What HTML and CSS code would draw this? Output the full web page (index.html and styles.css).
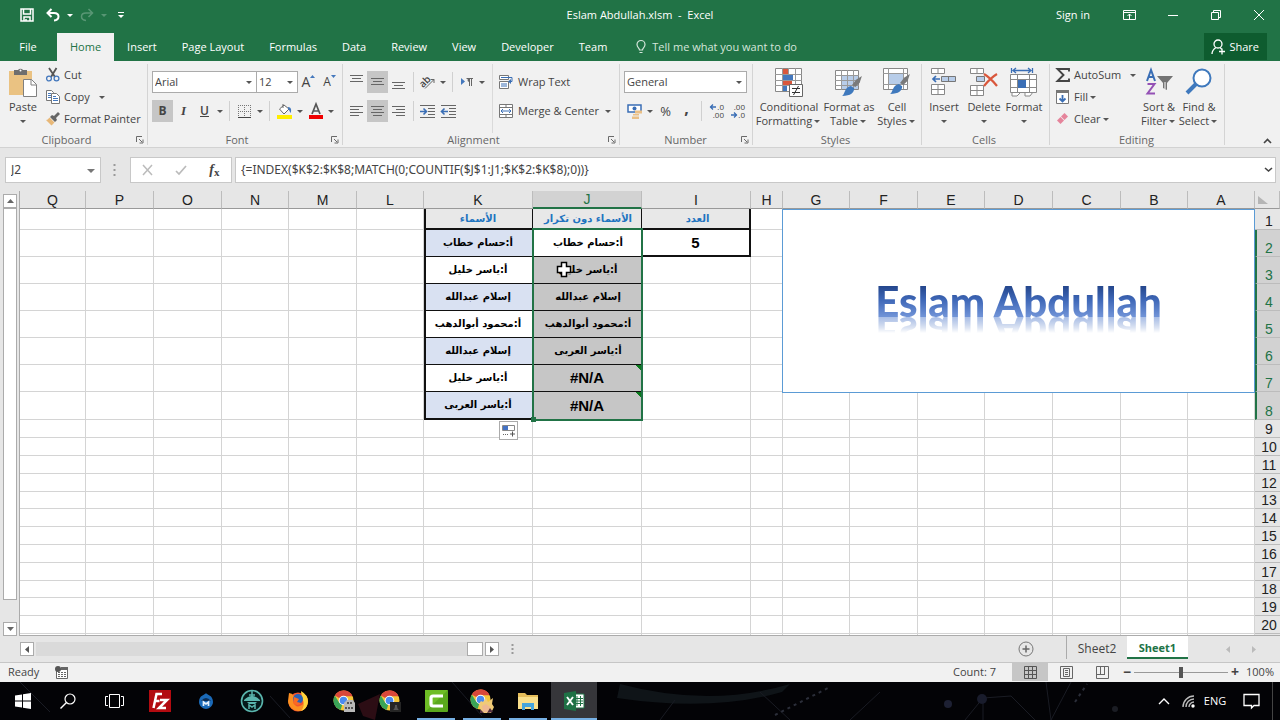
FILE: index.html
```html
<!DOCTYPE html>
<html lang="en">
<head>
<meta charset="utf-8">
<title>Eslam Abdullah.xlsm - Excel</title>
<link rel="stylesheet" href="styles.css">
</head>
<body>
<svg class="defs" aria-hidden="true">
  <symbol id="launch" viewBox="0 0 8 8"><path d="M.5 6V.5H6M3 3l3 3M7 3.500V7H3.500" fill="none" stroke="#6a6a6a"/></symbol>
  <symbol id="brush" viewBox="0 0 20 20"><path d="M19 1l-2 6-4 4-3-2 4-5z" fill="#7a7a7a"/><path d="M9 10l3 2c0 4-3 7-11 7 3-2 2-8 8-9z" fill="#3f79bd"/></symbol>
  <symbol id="chrome" viewBox="0 0 22 22"><circle cx="11" cy="11" r="10.500" fill="#f4c63a"/><path d="M11 11L1.900 5.750A10.500 10.500 0 0 1 20.100 5.750L11 6z" fill="#d9483b"/><path d="M11 11L8 21A10.500 10.500 0 0 1 1.900 5.750L6.700 13.500z" fill="#3aa457"/><path d="M11 .5A10.500 10.500 0 0 1 20.500 6.500H11z" fill="#d9483b"/><circle cx="11" cy="11" r="5" fill="#fff"/><circle cx="11" cy="11" r="4" fill="#4a8af0"/></symbol>
</svg>

<header class="titlebar">
  <div class="quick">
    <button aria-label="Save"><svg width="14" height="14" viewBox="0 0 14 14"><path d="M1 1h12v12H1zM3.500 1v5h7V1M4 13V9h6v4M6 13v-2" fill="none" stroke="#fff" stroke-width="1.500"/></svg></button>
    <button aria-label="Undo"><svg width="14" height="14" viewBox="0 0 14 14"><path d="M5.500 1L1.500 5l4 4M2 5h6c6 0 6 7 0 7.500" fill="none" stroke="#fff" stroke-width="2"/></svg></button>
    <i class="caret light"></i>
    <button aria-label="Redo" class="faded"><svg width="14" height="14" viewBox="0 0 14 14"><path d="M8.500 1l4 4-4 4M12 5H6c-6 0-6 7 0 7.500" fill="none" stroke="#fff" stroke-width="1.500"/></svg></button>
    <i class="caret light faded"></i>
    <button aria-label="Customize Quick Access Toolbar"><svg width="8" height="8" viewBox="0 0 8 8"><path d="M1 1.500h6" stroke="#fff"/><path d="M1 4h6L4 7z" fill="#fff"/></svg></button>
  </div>
  <h1>Eslam Abdullah.xlsm&nbsp; -&nbsp; Excel</h1>
  <div class="window">
    <button class="signin">Sign in</button>
    <button aria-label="Ribbon Display Options"><svg width="14" height="12" viewBox="0 0 14 12"><path d="M.5 1.500h12v9H.5zM.5 3.500h12M6.500 10V5M4.500 7l2-2 2 2" fill="none" stroke="#fff"/></svg></button>
    <button aria-label="Minimize"><svg width="10" height="10" viewBox="0 0 10 10"><path d="M0 5.500h10" stroke="#fff"/></svg></button>
    <button aria-label="Restore"><svg width="10" height="10" viewBox="0 0 10 10"><path d="M.5 2.500h7v7h-7zM2.500 2.500v-2h7v7h-2" fill="none" stroke="#fff"/></svg></button>
    <button aria-label="Close"><svg width="10" height="10" viewBox="0 0 10 10"><path d="M0 0l10 10M10 0L0 10" stroke="#fff"/></svg></button>
  </div>
</header>

<nav class="tabs">
  <button class="file">File</button><button class="on">Home</button><button>Insert</button><button>Page Layout</button><button>Formulas</button><button>Data</button><button>Review</button><button>View</button><button>Developer</button><button>Team</button>
  <button class="tell"><svg width="10" height="14" viewBox="0 0 10 14"><path d="M3.500 10C3.500 8 1 7.500 1 4.500a4 4 0 0 1 8 0C9 7.500 6.500 8 6.500 10zM3.500 12.500h3" fill="none" stroke="#d5e6db" stroke-width="1.200"/></svg>Tell me what you want to do</button>
  <button class="share"><svg width="15" height="16" viewBox="0 0 15 16"><circle cx="7" cy="5" r="4" fill="none" stroke="#fff" stroke-width="1.300"/><path d="M1 15c0-3 1-4.500 4-6.500M9 8.500l2 2M11 9.500v6M8 12.500h6" fill="none" stroke="#fff" stroke-width="1.300"/></svg>Share</button>
</nav>

<section class="ribbon">
  <div class="group g-clip">
    <div class="body">
      <button class="big paste"><svg width="28" height="30" viewBox="0 0 28 30"><path d="M0 3h23v24H0z" fill="#eac282"/><path d="M5 2h4a3 3 0 0 1 5 0h4v5H5z" fill="#6e6e6e"/><circle cx="11.500" cy="2.500" r="1" fill="#fff"/><path d="M14.500 11.500h8l5 5v12h-13z" fill="#fff" stroke="#808080"/><path d="M22 11.500v5.500h5.500" fill="none" stroke="#808080"/></svg><span>Paste</span><i class="caret"></i></button>
      <div class="stack">
        <button><svg width="14" height="14" viewBox="0 0 14 14"><path d="M3 0l6 9M10.500 0L5 9" stroke="#555" stroke-width="1.800"/><circle cx="3" cy="10.500" r="2.400" fill="none" stroke="#4478bd" stroke-width="1.300"/><circle cx="10.500" cy="10.500" r="2.400" fill="none" stroke="#4478bd" stroke-width="1.300"/></svg>Cut</button>
        <button><svg width="14" height="14" viewBox="0 0 14 14"><path d="M.5.5h5l2 2v8h-7z" fill="#fff" stroke="#777"/><path d="M2 3.500h3M2 5.500h4M2 7.500h4" stroke="#4478bd"/><path d="M5.500 3.500h5l3 3v7h-8z" fill="#fff" stroke="#777"/><path d="M7 6.500h3M7 8.500h5M7 10.500h5" stroke="#4478bd"/></svg>Copy<i class="caret far"></i></button>
        <button><svg width="14" height="14" viewBox="0 0 14 14"><path d="M12 0l2 2-4 4 1 2-2 2-5-5 2-2 2 1z" fill="#666"/><path d="M3.500 5.500l5 5-3 3L0 8c2 0 2-1 3.500-2.500z" fill="#e8b878"/></svg>Format Painter</button>
      </div>
    </div>
    <footer>Clipboard<button aria-label="Clipboard settings"><svg width="8" height="8"><use href="#launch"/></svg></button></footer>
  </div>

  <div class="group g-font">
    <div class="body rows">
      <div class="row">
        <span class="combo face"><select aria-label="Font"><option>Arial</option></select></span><span class="combo size"><select aria-label="Font size"><option>12</option></select></span>
        <button class="ib grow" aria-label="Increase font size"><b class="glyph">A</b><svg width="5" height="3"><path d="M0 3h5L2.500 0z" fill="#4478bd"/></svg></button>
        <button class="ib grow" aria-label="Decrease font size"><b class="glyph small">A</b><svg width="5" height="3"><path d="M0 0h5L2.500 3z" fill="#4478bd"/></svg></button>
      </div>
      <div class="row">
        <button class="ib on"><b>B</b></button><button class="ib serif"><em>I</em></button><button class="ib"><u>U</u></button><i class="caret"></i><i class="sep"></i>
        <button class="ib" aria-label="Borders"><svg width="13" height="13" viewBox="0 0 13 13"><path d="M.5 0v12M6.500 0v12M12.500 0v12M0 .5h13M0 6.500h13" stroke="#777" stroke-dasharray="1 1"/><path d="M0 12.500h13" stroke="#444"/></svg></button><i class="caret"></i><i class="sep"></i>
        <button class="ib" aria-label="Fill color"><svg width="16" height="16" viewBox="0 0 16 16"><path d="M6 1v4M2.500 6L7 2l5 4-5 5z" fill="#fff" stroke="#666"/><path d="M11 4c3 0 4 3 2.500 6-1-2-1-3-2.500-4z" fill="#4478bd"/><path d="M0 12h15v4H0z" fill="#ffee00"/></svg></button><i class="caret"></i>
        <button class="ib" aria-label="Font color"><svg width="16" height="16" viewBox="0 0 16 16"><path d="M4 11L8 1l4 10M5.500 8h5" fill="none" stroke="#555" stroke-width="1.700"/><path d="M1 12h14v4H1z" fill="#f00000"/></svg></button><i class="caret"></i>
      </div>
    </div>
    <footer>Font<button aria-label="Font settings"><svg width="8" height="8"><use href="#launch"/></svg></button></footer>
  </div>

  <div class="group g-align">
    <div class="body">
      <div class="rows">
        <div class="row">
          <button class="ib" aria-label="Top align"><svg width="13" height="14"><path d="M0 .5h13M2 3.500h9M0 6.500h13" stroke="#666"/></svg></button><button class="ib on" aria-label="Middle align"><svg width="13" height="14"><path d="M0 3.500h13M2 6.500h9M0 9.500h13" stroke="#666"/></svg></button><button class="ib" aria-label="Bottom align"><svg width="13" height="14"><path d="M0 7.500h13M2 10.500h9M0 13.500h13" stroke="#666"/></svg></button><i class="sep"></i>
          <button class="ib" aria-label="Orientation"><svg width="15" height="14" viewBox="0 0 15 14"><text x="-1" y="10" transform="rotate(-45 5 7)" font-family="Open Sans, sans-serif" font-size="10" font-weight="600" fill="#444">ab</text><path d="M5 13.500l9-9M14 8V4.500h-3.500" fill="none" stroke="#666"/></svg></button><i class="caret"></i><i class="sep"></i>
          <button class="ib" aria-label="Text direction"><svg width="12" height="10" viewBox="0 0 12 10"><path d="M0 1l4 3.500L0 8z" fill="#4478bd"/><path d="M8.500 1v8M10.500 1v8M5.500 1.500H12" stroke="#666"/><path d="M8.500 1a2 2 0 0 0 0 4z" fill="#666"/></svg></button><i class="caret"></i>
        </div>
        <div class="row">
          <button class="ib" aria-label="Align left"><svg width="13" height="12"><path d="M0 1.500h13M0 4.500h9M0 7.500h13M0 10.500h9" stroke="#666"/></svg></button><button class="ib on" aria-label="Center"><svg width="13" height="12"><path d="M0 1.500h13M2 4.500h9M0 7.500h13M2 10.500h9" stroke="#666"/></svg></button><button class="ib" aria-label="Align right"><svg width="13" height="12"><path d="M0 1.500h13M4 4.500h9M0 7.500h13M4 10.500h9" stroke="#666"/></svg></button><i class="sep"></i>
          <button class="ib" aria-label="Decrease indent"><svg width="15" height="13" viewBox="0 0 15 13"><path d="M0 .5h15M8 3.500h7M8 6.500h7M8 9.500h7M0 12.500h15" stroke="#666"/><path d="M0 6.500h6M3.500 3.500l3 3-3 3" fill="none" stroke="#3a6eb5" stroke-width="1.600"/></svg></button><button class="ib" aria-label="Increase indent"><svg width="15" height="13" viewBox="0 0 15 13"><path d="M0 .5h15M8 3.500h7M8 6.500h7M8 9.500h7M0 12.500h15" stroke="#666"/><path d="M1 6.500h6M3.500 3.500l-3 3 3 3" fill="none" stroke="#3a6eb5" stroke-width="1.600"/></svg></button>
        </div>
      </div>
      <div class="rows wide">
        <button class="row"><svg width="15" height="14" viewBox="0 0 15 14"><path d="M.5.500h9v4h-9zM.5 6.500h9v7h-9z" fill="#fff" stroke="#777"/><path d="M2 2.500h11v4h-2M2 9h6M2 11h6" fill="none" stroke="#3a6eb5"/><path d="M12 4v5L9 6.500z" fill="#3a6eb5"/></svg>Wrap Text</button>
        <button class="row"><svg width="15" height="14" viewBox="0 0 15 14"><path d="M.5.500h13v13H.5zM.5 3.500h13M.5 10.500h13M7 .5v3M7 10.500v3" fill="#fff" stroke="#777"/><path d="M2 7h10M4 5L2 7l2 2M10 5l2 2-2 2" fill="none" stroke="#3a6eb5"/></svg>Merge &amp; Center<i class="caret near"></i></button>
      </div>
    </div>
    <footer>Alignment<button aria-label="Alignment settings"><svg width="8" height="8"><use href="#launch"/></svg></button></footer>
  </div>

  <div class="group g-num">
    <div class="body rows">
      <div class="row"><span class="combo format"><select aria-label="Number format"><option>General</option></select></span></div>
      <div class="row">
        <button class="ib" aria-label="Accounting format"><svg width="16" height="15" viewBox="0 0 16 15"><path d="M1 1h13v7H1z" fill="#fff" stroke="#3a6eb5" stroke-width="1.500"/><circle cx="7.500" cy="4.500" r="2" fill="#3a6eb5"/><path d="M8 6.500h7v3H8zM6 10h6v1.500H6zM5 12.500h7V15H5z" fill="#eabf86"/></svg></button><i class="caret"></i><button class="ib pct">%</button><button class="ib comma">,</button><i class="sep"></i>
        <button class="ib dec" aria-label="Increase decimal"><span><svg width="6" height="6"><path d="M0 3h6M3 .5L.5 3 3 5.500" fill="none" stroke="#3a6eb5" stroke-width="1.300"/></svg>.0</span><span>.00</span></button><button class="ib dec" aria-label="Decrease decimal"><span>.00</span><span><svg width="6" height="6"><path d="M0 3h6M3 .5L5.500 3 3 5.500" fill="none" stroke="#3a6eb5" stroke-width="1.300"/></svg>.0</span></button>
      </div>
    </div>
    <footer>Number<button aria-label="Number settings"><svg width="8" height="8"><use href="#launch"/></svg></button></footer>
  </div>

  <div class="group g-styles">
    <div class="body">
      <button class="big w68"><svg width="28" height="30" viewBox="0 0 28 30"><path d="M.5.500h26v23H.5z" fill="#fff" stroke="#888"/><path d="M8 1h5v5H8zM8 12h9v5H8z" fill="#d9573c"/><path d="M8 6h10v6H8zM8 17h4v6H8z" fill="#4478bd"/><path d="M7.500 0v23M13.500 0v6M20.500 0v23M0 6.500h27M0 12.500h27M0 17.500h27" stroke="#999" fill="none"/><path d="M14.500 16.500h13v12h-13z" fill="#fff" stroke="#666"/><path d="M17 20.500h8M17 24.500h8M23.500 18l-5 9" stroke="#333"/></svg><span>Conditional</span><span>Formatting<i class="caret"></i></span></button>
      <button class="big w52"><svg width="28" height="30" viewBox="0 0 28 30"><path d="M.5 2.500h23v19H.5z" fill="#fff" stroke="#888"/><path d="M6 7h17v14H6z" fill="#b8cde9"/><path d="M6.500 2v20M12.500 2v20M18.500 2v20M0 7.500h24M0 12.500h24M0 17.500h24" stroke="#999"/><use href="#brush" x="6" y="7" width="22" height="22"/></svg><span>Format as</span><span>Table<i class="caret"></i></span></button>
      <button class="big w44"><svg width="28" height="30" viewBox="0 0 28 30"><path d="M.5.500h24v21H.5z" fill="#fff" stroke="#888"/><path d="M6 6h14v10H6z" fill="#b8cde9"/><path d="M5.500 0v21M20.500 0v21M0 5.500h25M0 16.500h25" stroke="#999"/><use href="#brush" x="6" y="5" width="22" height="22"/></svg><span>Cell</span><span>Styles<i class="caret"></i></span></button>
    </div>
    <footer>Styles</footer>
  </div>

  <div class="group g-cells">
    <div class="body">
      <button class="big w40"><svg width="26" height="30" viewBox="0 0 26 30"><path d="M.5.500h13v5H.5zM7 .5v5M.5 16.500h13v10H.5zM7 16.500v10M.5 21.500h13" fill="#fff" stroke="#888"/><path d="M10.500 8.500h14v5h-14zM17.500 8.500v5" fill="#b8cde9" stroke="#777"/><path d="M2 11h7M5 8l-3 3 3 3" fill="none" stroke="#3a6eb5" stroke-width="1.700"/></svg><span>Insert</span><i class="caret"></i></button>
      <button class="big w40"><svg width="28" height="30" viewBox="0 0 28 30"><path d="M.5.500h13v5H.5zM7 .5v5M.5 17.500h13v10H.5zM7 17.500v10M.5 22.500h13" fill="#fff" stroke="#888"/><path d="M6.500 8.500h8v5h-8z" fill="#b8cde9" stroke="#777"/><path d="M14 6c5 3 9 7 13 12M27 6c-5 3-9 7-13 12" fill="none" stroke="#d9573c" stroke-width="2.200"/></svg><span>Delete</span><i class="caret"></i></button>
      <button class="big w40"><svg width="28" height="30" viewBox="0 0 28 30"><path d="M1.500 0v5M22.500 0v5M3 2.500h18M6 0L3 2.500 6 5M18 0l3 2.500L18 5" fill="none" stroke="#3a6eb5" stroke-width="1.300"/><path d="M.5 6.500h26v18H.5zM7.500 6v18M19.500 6v18M.5 11.500h26M.5 19.500h26M2 24v4h5l4-4M15 24v4h5l3-4" fill="#fff" stroke="#888"/><path d="M8 12h8v8H8z" fill="#3a6eb5"/></svg><span>Format</span><i class="caret"></i></button>
    </div>
    <footer>Cells</footer>
  </div>

  <div class="group g-edit">
    <div class="body">
      <div class="stack">
        <button><svg width="14" height="14" viewBox="0 0 14 14"><path d="M13 3.500V1H1.500l6 6-6 6H13v-2.500" fill="none" stroke="#444" stroke-width="1.900"/></svg>AutoSum<i class="caret far"></i></button>
        <button><svg width="14" height="14" viewBox="0 0 14 14"><path d="M.5.500h12v13H.5z" fill="#fff" stroke="#777"/><path d="M0 0h13v3H0z" fill="#777"/><path d="M6.500 5v7M3.500 8.500l3 3 3-3" fill="none" stroke="#3a6eb5" stroke-width="1.800"/></svg>Fill<i class="caret"></i></button>
        <button><svg width="14" height="14" viewBox="0 0 14 14"><path d="M8.500 1L12 4.500 8.500 8 5 4.500z" fill="#e5849b"/><path d="M4.500 5L8 8.500 4.500 12 1 8.500z" fill="#e5849b"/></svg>Clear<i class="caret"></i></button>
      </div>
      <button class="big w40"><svg width="28" height="30" viewBox="0 0 28 30"><path d="M2 13L6 2l4 11M3 9h6" fill="none" stroke="#3a6eb5" stroke-width="2"/><path d="M2.500 16h7L2.500 25.500h7.500" fill="none" stroke="#9451b5" stroke-width="2"/><path d="M12 8h16l-6 7v7l-4-2v-5z" fill="#737373"/><path d="M20 14v7" stroke="#fff"/></svg><span>Sort &amp;</span><span>Filter<i class="caret"></i></span></button>
      <button class="big w40"><svg width="28" height="30" viewBox="0 0 28 30"><circle cx="17" cy="10" r="8.500" fill="#fff" stroke="#3f79bd" stroke-width="2"/><path d="M11 16L2 25" stroke="#3f79bd" stroke-width="4"/></svg><span>Find &amp;</span><span>Select<i class="caret"></i></span></button>
    </div>
    <footer>Editing</footer>
  </div>
  <button class="collapse" aria-label="Collapse the ribbon"><svg width="9" height="6"><path d="M1 5l3.500-3.500L8 5" fill="none" stroke="#444" stroke-width="1.600"/></svg></button>
</section>

<section class="formula">
  <span class="combo name"><input aria-label="Name box" value="J2"></span>
  <svg class="grip" width="3" height="12"><path d="M1.500 0v12" stroke="#999" stroke-width="2" stroke-dasharray="2 3"/></svg>
  <div class="fx">
    <button aria-label="Cancel"><svg width="11" height="10"><path d="M1 0l9 10M10 0L1 10" stroke="#bbb" stroke-width="1.500"/></svg></button>
    <button aria-label="Enter"><svg width="12" height="10"><path d="M1 6l3 3 7-8" fill="none" stroke="#bbb" stroke-width="1.700"/></svg></button>
    <button class="fn" aria-label="Insert function"><em>f</em><small>x</small></button>
  </div>
  <div class="entry"><input aria-label="Formula" value="{=INDEX($K$2:$K$8;MATCH(0;COUNTIF($J$1:J1;$K$2:$K$8);0))}"><svg width="9" height="6"><path d="M1 1l3.500 3L8 1" fill="none" stroke="#444" stroke-width="1.600"/></svg></div>
</section>

<main class="work">
  <div class="vscroll"><button aria-label="Scroll up"><svg width="7" height="4"><path d="M0 4h7L3.500 0z" fill="#666"/></svg></button><div class="thumb"></div><button aria-label="Scroll down"><svg width="7" height="4"><path d="M0 0h7L3.500 4z" fill="#666"/></svg></button></div>
  <div class="sheet">
    <table>
      <colgroup><col class="c66"><col class="c68"><col class="c68"><col class="c67"><col class="c68"><col class="c67"><col class="c109"><col class="c109"><col class="c109"><col class="c32"><col class="c67"><col class="c68"><col class="c67"><col class="c68"><col class="c68"><col class="c67"><col class="c67"><col class="c25"></colgroup>
      <thead><tr><th>Q</th><th>P</th><th>O</th><th>N</th><th>M</th><th>L</th><th>K</th><th class="sel">J</th><th>I</th><th>H</th><th>G</th><th>F</th><th>E</th><th>D</th><th>C</th><th>B</th><th>A</th><th class="corner"><svg width="10" height="8"><path d="M0 0l10 8H0z" fill="#b5b5b5"/></svg></th></tr></thead>
      <tbody>
      <tr class="first"><td><td><td><td><td><td><td class="hd k" dir="rtl">الأسماء</td><td class="hd j" dir="rtl">الأسماء دون تكرار</td><td class="hd i" dir="rtl">العدد</td><td><td><td><td><td><td><td><td><th>1</th></tr>
      <tr class="tall"><td><td><td><td><td><td><td class="k tint" dir="rtl">أ:حسام خطاب</td><td class="j active" dir="rtl">أ:حسام خطاب<div class="selection"></div></td><td class="i total">5</td><td><td><td><td><td><td><td><td><th class="sel">2</th></tr>
      <tr class="tall"><td><td><td><td><td><td><td class="k" dir="rtl">أ:ياسر خليل</td><td class="j" dir="rtl">أ:ياسر خليل<svg class="pointer" width="14" height="17" viewBox="0 0 14 17"><path d="M4.500 1.500h5v4h4v6h-4v4h-5v-4h-4v-6h4z" fill="#fff" stroke="#000" stroke-width="1.500"/></svg></td><td><td><td><td><td><td><td><td><td><th class="sel">3</th></tr>
      <tr class="tall"><td><td><td><td><td><td><td class="k tint" dir="rtl">إسلام عبدالله</td><td class="j" dir="rtl">إسلام عبدالله</td><td><td><td><td><td><td><td><td><td><th class="sel">4</th></tr>
      <tr class="tall"><td><td><td><td><td><td><td class="k" dir="rtl">أ:محمود أبوالدهب</td><td class="j" dir="rtl">أ:محمود أبوالدهب</td><td><td><td><td><td><td><td><td><td><th class="sel">5</th></tr>
      <tr class="tall"><td><td><td><td><td><td><td class="k tint" dir="rtl">إسلام عبدالله</td><td class="j" dir="rtl">أ:ياسر العربى</td><td><td><td><td><td><td><td><td><td><th class="sel">6</th></tr>
      <tr class="tall"><td><td><td><td><td><td><td class="k" dir="rtl">أ:ياسر خليل</td><td class="j err">#N/A</td><td><td><td><td><td><td><td><td><td><th class="sel">7</th></tr>
      <tr class="tall last"><td><td><td><td><td><td><td class="k tint" dir="rtl">أ:ياسر العربى<button class="autofill" aria-label="Auto fill options"><svg width="13" height="13" viewBox="0 0 13 13"><path d="M.5 1.500h12v5H.5z" fill="#fff" stroke="#888"/><path d="M1 2h5v4H1z" fill="#4472c4"/><path d="M1 10.500h6" stroke="#666" stroke-dasharray="1 1"/><path d="M8 10h5M10.500 7.500v5" stroke="#555"/></svg></button></td><td class="j err">#N/A</td><td><td><td><td><td><td><td><td><td><th class="sel">8</th></tr>
      <tr><td><td><td><td><td><td><td><td><td><td><td><td><td><td><td><td><td><th>9</th></tr>
      <tr><td><td><td><td><td><td><td><td><td><td><td><td><td><td><td><td><td><th>10</th></tr>
      <tr><td><td><td><td><td><td><td><td><td><td><td><td><td><td><td><td><td><th>11</th></tr>
      <tr><td><td><td><td><td><td><td><td><td><td><td><td><td><td><td><td><td><th>12</th></tr>
      <tr class="tight"><td><td><td><td><td><td><td><td><td><td><td><td><td><td><td><td><td><th>13</th></tr>
      <tr><td><td><td><td><td><td><td><td><td><td><td><td><td><td><td><td><td><th>14</th></tr>
      <tr><td><td><td><td><td><td><td><td><td><td><td><td><td><td><td><td><td><th>15</th></tr>
      <tr><td><td><td><td><td><td><td><td><td><td><td><td><td><td><td><td><td><th>16</th></tr>
      <tr><td><td><td><td><td><td><td><td><td><td><td><td><td><td><td><td><td><th>17</th></tr>
      <tr class="tight"><td><td><td><td><td><td><td><td><td><td><td><td><td><td><td><td><td><th>18</th></tr>
      <tr><td><td><td><td><td><td><td><td><td><td><td><td><td><td><td><td><td><th>19</th></tr>
      <tr><td><td><td><td><td><td><td><td><td><td><td><td><td><td><td><td><td><th>20</th></tr>
      <tr><td><td><td><td><td><td><td><td><td><td><td><td><td><td><td><td><td><th></th></tr>
      </tbody>
    </table>
    <div class="banner"><span>Eslam Abdullah</span></div>
  </div>
</main>

<div class="sheetbar">
  <div class="hscroll"><button aria-label="Scroll left"><svg width="4" height="7"><path d="M4 0v7L0 3.500z" fill="#555"/></svg></button><div class="track"><div class="thumb"></div></div><button aria-label="Scroll right"><svg width="4" height="7"><path d="M0 0v7l4-3.500z" fill="#555"/></svg></button></div>
  <svg class="dots" width="3" height="10"><path d="M1.500 0v10" stroke="#999" stroke-width="2" stroke-dasharray="2 2"/></svg>
  <button class="add" aria-label="New sheet"><svg width="16" height="16"><circle cx="8" cy="8" r="7" fill="none" stroke="#777"/><path d="M8 4.500v7M4.500 8h7" stroke="#666" stroke-width="1.500"/></svg></button>
  <button class="tab">Sheet2</button><button class="tab on">Sheet1</button>
  <div class="pager"><button aria-label="Previous sheet"><svg width="4" height="7"><path d="M4 0v7L0 3.500z" fill="#bbb"/></svg></button><button aria-label="Next sheet"><svg width="4" height="7"><path d="M0 0v7l4-3.500z" fill="#bbb"/></svg></button></div>
</div>

<div class="status">
  <span>Ready</span>
  <button class="macro" aria-label="Record macro"><svg width="13" height="13" viewBox="0 0 13 13"><path d="M1.500 3.500h11v9h-11z" fill="#fff" stroke="#666"/><path d="M6 1h7v3H6z" fill="#666"/><circle cx="3" cy="3" r="3" fill="#555"/><path d="M3 6.500h9M3 8.500h9M3 10.500h9" stroke="#666" stroke-dasharray="2 1"/></svg></button>
  <span class="count">Count: 7</span>
  <button class="view on" aria-label="Normal"><svg width="13" height="13"><path d="M.5.500h12v12H.5zM4.500 0v13M8.500 0v13M0 4.500h13M0 8.500h13" fill="none" stroke="#555"/></svg></button>
  <button class="view" aria-label="Page layout"><svg width="13" height="13"><path d="M.5.500h12v12H.5zM3.500 2.500h6v8h-6zM5 4.500h3M5 6.500h3M5 8.500h3" fill="none" stroke="#666"/></svg></button>
  <button class="view" aria-label="Page break preview"><svg width="13" height="13"><path d="M.5.500h12v12H.5zM4.500 0v8M8.500 0v8M0 8.500h9" fill="none" stroke="#666"/></svg></button>
  <button class="zoom" aria-label="Zoom out">−</button><input type="range" aria-label="Zoom" min="0" max="200" value="100"><button class="zoom" aria-label="Zoom in">+</button>
  <span class="percent">100%</span>
</div>

<footer class="taskbar">
  <svg class="wall" viewBox="0 0 1280 38" preserveAspectRatio="none" aria-hidden="true"><path d="M620 2q90 24 170 0l-8 8q-70 20-165 6z" fill="#0f1418"/><path d="M358 22l22-10-5 26-12-4z" fill="#2c0d14"/><path d="M452 0l30 34M760 10l30 28M660 38l15-20M880 10l-30 28M965 38l18-22 28-2 24 24M983 16V38M1046 0l5 38 20-38M20 0l30 30M270 14l20 22" fill="none" stroke="#1a1c24"/><path d="M775 33l55-28M1075 20l12-18" stroke="#2b2e39" stroke-width="2" stroke-dasharray="3 4"/><circle cx="948" cy="22" r="4" fill="#1d2033"/><circle cx="982" cy="17" r="5" fill="#191c2c"/><circle cx="1115" cy="27" r="3" fill="#1b1d24"/></svg>
  <button class="start" aria-label="Start"><svg width="16" height="16"><path d="M0 2.500L7 1.500v6H0zM8 1.300L16 0v7.500H8zM0 8.500h7v6l-7-1zM8 8.500h8V16l-8-1.200z" fill="#fff"/></svg></button>
  <button aria-label="Search"><svg width="16" height="16"><circle cx="10" cy="6" r="5" fill="none" stroke="#fff" stroke-width="1.200"/><path d="M6.500 9.500L.5 15.500" stroke="#fff" stroke-width="1.400"/></svg></button>
  <button aria-label="Task view"><svg width="19" height="14"><path d="M4.500.5h10v13h-10zM3 2.500H.5v9H3M16 2.500h2.500v9H16" fill="none" stroke="#fff"/></svg></button>
  <button aria-label="FileZilla"><svg width="22" height="22"><path d="M0 0h22v22H0z" fill="#b30b10"/><path d="M13 4H7.500L4.500 18M5.500 11h5M11 10h7l-8 8h7" fill="none" stroke="#fff" stroke-width="2.500"/></svg></button>
  <button aria-label="Blue drop"><svg width="16" height="18"><path d="M8 1c1 2 7 2 7 9 0 4-4 7-7 7s-7-3-7-7c0-7 6-7 7-9z" fill="#1b6ab8"/><path d="M3 9q5-6 10 0z" fill="#0c2d55"/><path d="M5.500 14v-4l2.500 2 2.500-2v4" fill="none" stroke="#e4effa" stroke-width="1.700"/></svg></button>
  <button aria-label="Teal app"><svg width="24" height="24"><circle cx="12" cy="12" r="10.500" fill="#06191a" stroke="#5ab5ad" stroke-width="1.600"/><path d="M4 11q8-8 16 0v1H4zM7 13h10l-2 2H9z" fill="#5ab5ad"/><path d="M12 1v7M9 6h6M9 20v-4l3 2 3-2v4" fill="none" stroke="#5ab5ad" stroke-width="1.500"/></svg></button>
  <button aria-label="Firefox"><svg width="22" height="22"><circle cx="11" cy="12" r="9.500" fill="#f2542d"/><path d="M2 3q3 0 5 3l-1 6q3 7 9 3 4-3 1-8l-2-5q7 3 7 9c0 6-4 10-9 10S1 17 1 11z" fill="#fc8f20"/><path d="M14 1q7 4 7 11-1 7-7 9 5-6 1-13z" fill="#ffd43c"/><circle cx="11" cy="9" r="5" fill="#2862b8"/><path d="M7 7l5 2-2 3 4 1q-3 4-8 0z" fill="#f96a24"/></svg></button>
  <button aria-label="Chrome profile 1"><svg width="22" height="22"><use href="#chrome" width="21" height="21"/><path d="M11 13l3-3h6l2 3v9H11z" fill="#b9b9b9"/><path d="M12 18h9M14 13h5" stroke="#555" stroke-width="2" stroke-dasharray="2 1"/></svg></button>
  <button aria-label="Chrome profile 2"><svg width="22" height="22"><use href="#chrome" width="21" height="21"/><path d="M11 12h11v10H11z" fill="#252525"/><path d="M14 20q2-1 2-5h2q0 4 2 5z" fill="#555"/></svg></button>
  <button class="run" aria-label="Camtasia"><svg width="23" height="22"><rect width="23" height="22" rx="1" fill="#5aa81c"/><path d="M0 0h23L0 22z" fill="#6ebd25"/><path d="M18 6H8Q6 6 6 8v6q0 2 2 2h10" fill="none" stroke="#fff" stroke-width="3.200"/></svg></button>
  <button class="run" aria-label="Chrome profile 3"><svg width="24" height="24"><use href="#chrome" width="21" height="21"/><path d="M9 15l2-3 2 1 3-4 2 4 5-4-1 6 2 3-3 6H11z" fill="#f0ca77"/><path d="M12 17l4-2 4 3-2 5h-5z" fill="#eeb891"/><path d="M10 20l4 4h-4zM20 19l3 4-6 1z" fill="#553042"/></svg></button>
  <button class="run" aria-label="File Explorer"><svg width="20" height="19"><path d="M0 1h7l2 2h11v14H0z" fill="#e5bd5b"/><path d="M0 5h20v12H0z" fill="#f9df8b"/><path d="M4 18v-7h12v7h-3v-3H7v3z" fill="#45a5dc"/></svg></button>
  <button class="run current" aria-label="Excel"><svg width="20" height="20"><path d="M9 3h11v14H9z" fill="#fff" stroke="#217346"/><path d="M13 5v10M16.500 5v10M10 7.500h9M10 10h9M10 12.500h9" stroke="#217346"/><path d="M0 2l12-2v20L0 18z" fill="#1e7145"/><path d="M3 6l6 8M9 6l-6 8" stroke="#fff" stroke-width="1.900"/></svg></button>
  <div class="tray">
    <button aria-label="Show hidden icons"><svg width="12" height="8"><path d="M1 7l5-5 5 5" fill="none" stroke="#fff" stroke-width="1.400"/></svg></button>
    <button aria-label="Network"><svg width="13" height="13"><path d="M1 12A11 11 0 0 1 12 1M4 12a8 8 0 0 1 8-8M7 12a5 5 0 0 1 5-5" fill="none" stroke="#bbb" stroke-width="1.400"/><circle cx="11" cy="11" r="1.700" fill="#fff"/></svg></button>
    <button class="lang">ENG</button>
    <button aria-label="Notifications"><svg width="17" height="16"><path d="M1 1.500h15v11h-5l-2.500 2.500V12.500H1z" fill="none" stroke="#fff" stroke-width="1.300"/></svg></button>
    <i class="desktop"></i>
  </div>
</footer>
</body>
</html>
```
FILE: styles.css
```css
* { box-sizing: border-box; }
body {
  margin: 0;
  height: 100vh;
  display: flex;
  flex-direction: column;
  overflow: hidden;
  background: #e6e6e6;
  color: #444;
  font: 11px/14px "Open Sans", "Noto Sans", sans-serif;
}
button, input, select { font: inherit; color: inherit; border: 0; padding: 0; background: none; border-radius: 0; }
button { display: flex; align-items: center; justify-content: center; white-space: nowrap; }
svg { display: block; flex: none; overflow: visible; }
.defs { position: absolute; width: 0; height: 0; }
.caret { width: 10px; flex: none; display: inline-flex; justify-content: center; }
.caret::before { content: ""; border: 3px solid transparent; border-top-color: #555; border-bottom: 0; }
.caret.light::before { border-top-color: #fff; }
.faded { opacity: .25; }

/* title bar */
.titlebar { flex: none; height: 30px; display: grid; grid-template-columns: 1fr auto 1fr; align-items: center; background: #217346; color: #fff; }
.titlebar h1 { margin: 0; font-size: 11px; font-weight: 400; }
.quick { display: flex; align-items: center; padding-left: 14px; }
.quick button { width: 26px; height: 26px; }
.quick .caret { width: 8px; }
.window { display: flex; justify-content: flex-end; }
.window button { width: 43px; height: 28px; }
.window .signin { width: 70px; }

/* ribbon tabs */
.tabs { flex: none; height: 31px; display: flex; align-items: stretch; gap: 1px; padding: 3px 13px 0 0; background: #217346; color: #fff; }
.tabs button { padding: 0 12px; }
.tabs .file { width: 56px; }
.tabs .on { padding: 0 13px; background: #f1f1f1; color: #217346; }
.tabs .tell { margin-left: 4px; gap: 6px; color: #d5e6db; }
.tabs .share { margin: 0 0 1px auto; padding: 0 8px 0 7px; gap: 3px; background: #0e5c2f; }

/* ribbon */
.ribbon { flex: none; height: 87px; display: flex; padding: 3px 0 0; background: #f1f1f1; border-bottom: 1px solid #d2d2d2; }
.group { display: flex; flex-direction: column; height: 81px; border-right: 1px solid #d4d4d4; }
.g-clip { width: 148px; }
.g-font { width: 195px; padding-left: 4px; }
.g-align { width: 277px; padding-left: 3px; }
.g-num { width: 133px; padding-left: 4px; }
.g-styles { width: 169px; padding-left: 2px; }
.g-cells { width: 128px; padding-left: 2px; }
.g-edit { width: 175px; padding-left: 4px; }
.body { flex: 1; display: flex; }
.group footer { position: relative; height: 12px; padding-right: 14px; text-align: center; color: #666; }
.g-font footer { padding-right: 20px; }
.g-align footer, .g-num footer, .g-styles footer, .g-cells footer, .g-edit footer { padding-right: 5px; }
.g-align footer { padding-right: 18px; }
.group footer button { position: absolute; right: 3px; top: 3px; }
.big { flex-direction: column; justify-content: flex-start; padding-top: 4px; line-height: 14px; color: #444; }
.big svg { margin-bottom: 2px; }
.big span { display: flex; align-items: center; }
.big .caret { height: 14px; align-items: center; }
.paste { width: 46px; }
.w68 { width: 68px; }
.w52 { width: 52px; }
.w44 { width: 44px; }
.w40 { width: 40px; }
.stack { display: flex; flex-direction: column; align-items: flex-start; }
.stack button { height: 22px; }
.stack svg { margin-right: 4px; }
.g-edit .stack { width: 85px; padding-left: 2px; }
.caret.far { margin-left: 7px; }
.caret.near { margin-left: 4px; }
.rows { display: flex; flex-direction: column; gap: 7px; padding-top: 7px; }
.row { height: 22px; display: flex; align-items: center; justify-content: flex-start; }
.ib { width: 21px; height: 22px; flex: none; }
.ib.on { background: #c6c6c6; }
.ib b { font-size: 12px; }
.ib u { font-size: 12px; font-weight: 600; }
.serif { font: 600 13px "Liberation Serif", serif; }
.grow { align-items: flex-start; padding-top: 4px; }
.grow .glyph { font-size: 14px; font-weight: 400; }
.grow .small { font-size: 12px; }
.pct { font-size: 13px; }
.comma { font-size: 16px; font-weight: 700; padding-bottom: 6px; }
.dec { flex-direction: column; align-items: flex-end; padding-right: 3px; font-size: 8px; line-height: 8px; }
.dec span { display: flex; align-items: center; gap: 1px; }
.sep { flex: none; width: 9px; height: 20px; display: flex; justify-content: center; }
.sep::before { content: ""; width: 1px; background: #d0d0d0; }
.g-align .sep { width: 8px; }
.wide { margin-left: 5px; padding-left: 6px; border-left: 1px solid #dadada; }
.wide svg { margin-right: 4px; }
.combo { position: relative; display: flex; height: 22px; background: #fff; border: 1px solid #ababab; }
.combo select, .combo input { flex: 1; width: 100%; padding-left: 2px; appearance: none; outline: 0; }
.combo::after { content: ""; position: absolute; right: 4px; top: 9px; border: 3px solid transparent; border-top-color: #555; border-bottom: 0; pointer-events: none; }
.face { width: 105px; }
.size { width: 41px; border-left: 0; }
.format { width: 123px; }
.collapse { margin: auto 0 3px auto; padding: 0 8px 0 0; }

/* formula bar */
.formula { flex: none; height: 43px; display: flex; align-items: flex-start; padding: 9px 4px 0 5px; font: 12px/16px "Noto Sans", sans-serif; }
.formula .combo, .fx, .entry { height: 26px; border: 1px solid #c8c8c8; background: #fff; }
.formula .name { width: 96px; font-size: 12px; }
.name input { padding-left: 5px; }
.formula .name::after { top: 11px; right: 5px; border-width: 4px 4px 0; border-top-color: #777; }
.grip { margin: 7px 14px 0 12px; }
.fx { width: 102px; display: flex; }
.fx button { flex: 1; }
.fn { font: 700 14px "Liberation Serif", serif; }
.fn small { font-size: 11px; padding-top: 4px; }
.entry { flex: 1; display: flex; align-items: center; margin-left: 3px; padding: 0 2px 0 5px; }
.entry input { flex: 1; outline: 0; }

/* worksheet */
.work { flex: 1; min-height: 0; display: flex; overflow: hidden; }
.vscroll { width: 20px; padding: 3px 3px 0; display: flex; flex-direction: column; border-right: 1px solid #ababab; }
.vscroll button { height: 14px; width: 14px; background: #fff; border: 1px solid #ababab; }
.vscroll .thumb { width: 14px; flex: 1; margin-bottom: 22px; background: #fff; border: 1px solid #ababab; }
.sheet { position: relative; flex: 1; overflow: hidden; background: #fff; border-bottom: 1px solid #ababab; }
table { width: 100%; table-layout: fixed; border-collapse: separate; border-spacing: 0; font: 14px/16px "Liberation Sans", "DejaVu Sans", sans-serif; color: #000; }
.c25 { width: 25px; } .c32 { width: 32px; } .c66 { width: 66px; } .c67 { width: 67px; } .c68 { width: 68px; } .c109 { width: 109px; }
th, td { padding: 0; text-align: center; height: 18px; border: 0 solid #d4d4d4; border-width: 0 1px 1px 0; white-space: nowrap; }
th { background: #e6e6e6; font-weight: 400; color: #222; border-color: #bcbcbc; }
thead th { border-bottom-color: #999; }
thead .sel { background: #d2d2d2; color: #217346; border-bottom: 2px solid #217346; }
.corner svg { margin-left: 3px; }
tbody th { border-right: 0; padding-left: 3px; vertical-align: bottom; line-height: 15px; }
tbody .sel { padding-left: 1px; background: #d2d2d2; color: #217346; border-left: 2px solid #217346; }
.first > * { height: 21px; }
.tall > * { height: 27px; }
.last > * { height: 28px; }
.tight > * { height: 17px; }
td.k, td.j, td.i { font-weight: 700; border-color: #111; position: relative; }
td[dir] { font: 700 10px/14px "DejaVu Sans", sans-serif; }
td.k { border-left: 2px solid #111; }
td.tint { background: #d9e1f2; }
td.j { background: #c6c6c6; border-right-color: #217346; }
td.j.active { background: #fff; }
td.hd { background: #e8e8e8; color: #1f74c0; border-bottom-width: 2px; border-right-color: #111; }
td.i { border-right-width: 2px; border-bottom-width: 2px; }
td.total { font-size: 15px; }
.last td.k { border-bottom-width: 2px; }
td.err { font-size: 15px; background: linear-gradient(225deg, #0b7a1e 4px, #c6c6c6 4px); }
.selection { position: absolute; z-index: 2; left: -2px; top: -2px; width: 111px; height: 193px; border: 2px solid #217346; pointer-events: none; }
.selection::after { content: ""; position: absolute; left: -3px; bottom: -3px; width: 5px; height: 5px; background: #217346; }
.pointer { position: absolute; left: 23px; top: 4px; }
.autofill { position: absolute; z-index: 3; right: 13px; top: 29px; width: 19px; height: 19px; background: #fff; border: 1px solid #ababab; }
.banner { position: absolute; top: 18px; right: 25px; width: 473px; height: 184px; display: flex; align-items: center; justify-content: center; background: #fff; border: 1px solid #5b9bd5; }
.banner span {
  font: 900 42px/50px Lato, "Open Sans", sans-serif;
  color: transparent;
  background: linear-gradient(#24468c 10px, #3f68b8 24px, #6f92d6 40px);
  background-clip: text;
  -webkit-box-reflect: below -18px linear-gradient(transparent 50%, rgba(0, 0, 0, .6) 82%);
}

/* sheet tabs */
.sheetbar { flex: none; height: 26px; display: flex; align-items: center; padding-left: 20px; background: #e6e6e6; }
.hscroll { width: 479px; display: flex; gap: 2px; }
.hscroll button { width: 14px; height: 14px; background: #fff; border: 1px solid #ababab; }
.track { flex: 1; display: flex; justify-content: flex-end; background: #dadada; }
.track .thumb { width: 16px; background: #fff; border: 1px solid #ababab; }
.dots { margin-left: 12px; }
.add { margin-left: auto; margin-right: 32px; }
.tab { align-self: stretch; width: 61px; margin-bottom: 3px; padding-top: 2px; font-size: 12px; }
.tab:not(.on) { border-left: 1px solid #ababab; }
.tab.on { padding-top: 3px; background: #fff; color: #217346; font-size: 11px; font-weight: 700; border-bottom: 2px solid #217346; }
.pager { width: 92px; display: flex; justify-content: flex-end; gap: 22px; padding-right: 24px; }

/* status bar */
.status { flex: none; height: 20px; display: flex; align-items: center; padding: 0 6px 1px 8px; background: #f1f1f1; border-top: 1px solid #c6c6c6; }
.macro { margin-left: 16px; }
.count { margin-left: auto; margin-right: 16px; }
.view { width: 36px; align-self: stretch; }
.view.on { background: #c6c6c6; }
.zoom { width: 14px; font-size: 14px; font-weight: 700; }
.status input { width: 94px; height: 12px; margin: 0; appearance: none; background: linear-gradient(#999, #999) center / 100% 1px no-repeat; }
.status input::-webkit-slider-thumb { appearance: none; width: 4px; height: 11px; background: #555; }
.percent { width: 32px; text-align: right; }

/* taskbar */
.taskbar { position: relative; flex: none; height: 38px; display: flex; background: #030306; }
.wall { position: absolute; width: 100%; height: 100%; overflow: hidden; }
.taskbar button { position: relative; width: 46px; }
.taskbar .start { width: 45px; }
.run::after { content: ""; position: absolute; left: 4px; right: 4px; bottom: 0; height: 2px; background: #76b0e4; }
.current { background: #36363a; }
.current::after { left: 0; right: 0; }
.tray { position: relative; margin-left: auto; display: flex; color: #fff; }
.tray button { width: 24px; }
.taskbar .lang { width: 30px; }
.tray button:nth-child(4) { width: 42px; }
.desktop { width: 8px; border-left: 1px solid #444; }
```
